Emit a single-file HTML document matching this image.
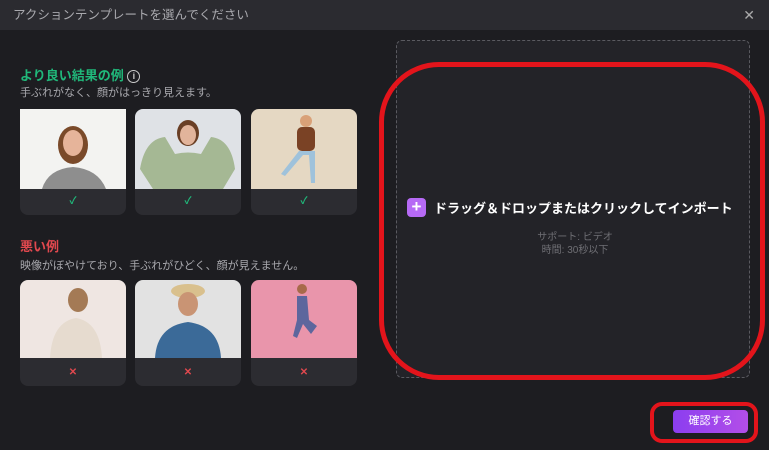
<!DOCTYPE html>
<html><head><meta charset="utf-8"><style>
*{margin:0;padding:0;box-sizing:border-box}
body{width:769px;height:450px;background:#1d1d21;font-family:"Liberation Sans","Noto Sans CJK JP",sans-serif;position:relative;overflow:hidden}
.title{position:absolute;left:0;top:0;width:769px;height:30px;background:#2b2b30;color:#a9a9ae;font-size:12.5px;line-height:30px;padding-left:13px}
.x{position:absolute;right:14px;top:0;color:#aaa;font-size:14px;line-height:30px}
.h{position:absolute;left:20px;font-size:13px;font-weight:bold}
.s{position:absolute;left:20px;font-size:11px;color:#a8a8ad}
.card{position:absolute;width:106px;height:106px;border-radius:8px;background:#2c2c31;overflow:hidden}
.card svg{display:block}
.mk{position:absolute;left:0;right:0;bottom:0;height:26px;text-align:center;line-height:26px;font-size:10px;font-weight:bold}
.drop{position:absolute;left:396px;top:40px;width:354px;height:338px;border:1px dashed #5a5a60;border-radius:6px;background:#232328}
.ring{position:absolute;left:379px;top:62px;width:386px;height:318px;border:5px solid #e3141b;border-radius:60px}
.imp{position:absolute;left:407px;top:198px;color:#fff;font-weight:bold;font-size:13px;display:flex;align-items:center}
.plus{width:19px;height:19px;border-radius:4px;background:#b66af5;color:#fff;font-size:17px;line-height:18px;text-align:center;margin-right:8px}
.sub{position:absolute;left:380px;width:390px;text-align:center;color:#6f6f74;font-size:10px}
.btn{position:absolute;left:673px;top:410px;width:75px;height:23px;border-radius:4px;background:linear-gradient(90deg,#8b3ef0,#b34ee8);color:#fff;font-size:11px;text-align:center;line-height:23px}
.bring{position:absolute;left:650px;top:402px;width:108px;height:41px;border:4px solid #e3141b;border-radius:12px}
</style></head><body>
<div class="title">アクションテンプレートを選んでください</div>
<div class="x">✕</div>
<div class="h" style="top:65px;color:#20b87a">より良い結果の例 <span style="display:inline-block;width:13px;height:13px;border:1px solid #ccc;border-radius:50%;color:#ccc;font-size:9px;line-height:11px;text-align:center;vertical-align:1px">i</span></div>
<div class="s" style="top:84px">手ぶれがなく、顔がはっきり見えます。</div>

<div class="card" style="left:20px;top:109px;border-radius:0 0 8px 8px"><svg width="106" height="80"><rect width="106" height="80" fill="#f3f3f1"/><ellipse cx="53" cy="36" rx="15" ry="19" fill="#7a4a2a"/><ellipse cx="53" cy="34" rx="10" ry="13" fill="#e6b49a"/><path d="M22 80 Q28 60 53 58 Q78 60 86 80Z" fill="#8e8e8e"/></svg><div class="mk" style="color:#20b87a">✓</div></div>
<div class="card" style="left:135px;top:109px"><svg width="106" height="80"><rect width="106" height="80" fill="#dfe2e6"/><ellipse cx="53" cy="24" rx="11" ry="13" fill="#6a3f25"/><ellipse cx="53" cy="26" rx="8" ry="10" fill="#e2b49b"/><path d="M5 60 Q10 30 30 28 L40 45 Q53 42 66 45 L76 28 Q96 30 100 60 L88 80 L18 80Z" fill="#a5b894"/></svg><div class="mk" style="color:#20b87a">✓</div></div>
<div class="card" style="left:251px;top:109px"><svg width="106" height="80"><rect width="106" height="80" fill="#e5d8c3"/><circle cx="55" cy="12" r="6" fill="#d9a178"/><rect x="46" y="18" width="18" height="24" rx="5" fill="#7a4225"/><path d="M48 42 L30 65 L34 67 L52 46 L58 46 L60 74 L64 74 L64 42Z" fill="#9fc2db"/></svg><div class="mk" style="color:#20b87a">✓</div></div>

<div class="h" style="top:236px;color:#e0484e">悪い例</div>
<div class="s" style="top:257px">映像がぼやけており、手ぶれがひどく、顔が見えません。</div>

<div class="card" style="left:20px;top:280px"><svg width="106" height="78"><rect width="106" height="78" fill="#efe6e2"/><ellipse cx="58" cy="20" rx="10" ry="12" fill="#a47a55"/><path d="M30 78 Q32 42 56 38 Q80 42 82 78Z" fill="#e6dbcf"/></svg><div class="mk" style="color:#e0484e">✕</div></div>
<div class="card" style="left:135px;top:280px"><svg width="106" height="78"><rect width="106" height="78" fill="#e2e2e2"/><ellipse cx="53" cy="11" rx="17" ry="7" fill="#d9c08d"/><ellipse cx="53" cy="24" rx="10" ry="12" fill="#c99474"/><path d="M20 78 Q22 46 53 42 Q84 46 86 78Z" fill="#3b6a98"/></svg><div class="mk" style="color:#e0484e">✕</div></div>
<div class="card" style="left:251px;top:280px"><svg width="106" height="78"><rect width="106" height="78" fill="#e995ab"/><circle cx="51" cy="9" r="5" fill="#a86a4a"/><path d="M46 16 L56 16 L58 40 L66 46 L60 54 L52 44 L46 58 L42 56 L46 40Z" fill="#3a5a9a" opacity=".8"/></svg><div class="mk" style="color:#e0484e">✕</div></div>

<div class="drop"></div>
<div class="ring"></div>
<div class="imp"><div class="plus">+</div>ドラッグ＆ドロップまたはクリックしてインポート</div>
<div class="sub" style="top:228px">サポート: ビデオ</div>
<div class="sub" style="top:241px">時間:&nbsp;30秒以下</div>
<div class="btn">確認する</div>
<div class="bring"></div>
</body></html>
